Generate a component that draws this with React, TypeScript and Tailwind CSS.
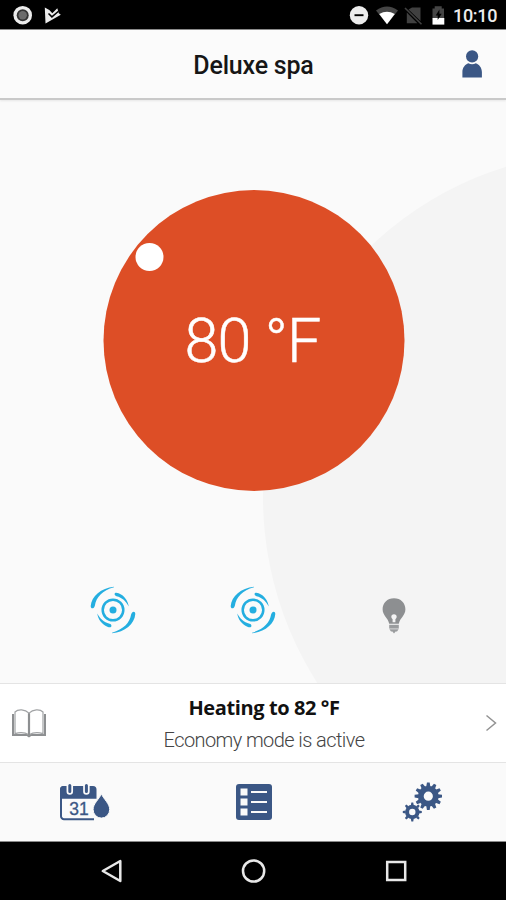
type IconProps = {
  className?: string;
};

const navy = "#3b5785";

const StatusBar = () => {
  return (
    <div className="flex h-[29px] items-center justify-between bg-black">
      <svg width="70" height="29" viewBox="0 0 70 29">
        <circle cx="22.7" cy="15.2" r="9.3" fill="#ececec" />
        <circle cx="22.7" cy="15.2" r="6" fill="#333" />
        <circle cx="22.7" cy="15.2" r="4.2" fill="#6b6b6b" />
        <path d="M44.8 7.500l4.500 2.500 3 3.200 5-5 1.500 5 2 1.500L45.500 23.600z" fill="#ececec" />
        <path d="M48.500 13.500l3.400 3.400 6.600-5.600" fill="none" stroke="#000" strokeWidth="1.500" />
      </svg>
      <div className="flex h-[29px]">
        <svg width="98" height="29" viewBox="348 0 98 29">
          <circle cx="359" cy="15.2" r="9.2" fill="#ececec" />
          <path d="M354.5 15.2h9" stroke="#000" strokeWidth="1.9" />
          <path d="M376 10.6 Q387 2.4 398 10.6 L387 24.2 Z" fill="#454545" />
          <path d="M379.2 14 Q387 9.4 394.8 14 L387 24.2 Z" fill="#fff" />
          <path d="M412 7.5h8.5v13.5L408.5 9.4z" fill="#404040" />
          <path d="M406.8 12.5v10.7h10.6z" fill="#404040" />
          <path d="M405 8l16.5 16.2" stroke="#404040" strokeWidth="1.6" />
          <path d="M432.5 8.4h2.2V6.2h7v2.2h2.3v10h-11.5z" fill="#454545" />
          <path d="M432.5 18h11.8v6.6h-11.8z" fill="#fff" />
          <path d="M439.4 9.5l-3.7 6h2v4.5l4-6.3h-2.3z" fill="#000" />
        </svg>
        <span className="w-[60px] pl-[7px] pt-[1px] font-['Roboto',sans-serif] text-[18px] leading-[30px] font-medium tracking-[-0.300px] text-[#ececec]">
          10:10
        </span>
      </div>
    </div>
  );
};

const UserIcon = ({ className }: IconProps) => (
  <svg className={className} width="22" height="30" viewBox="461 49 22 30" fill={navy}>
    <circle cx="472.1" cy="56.4" r="6.1" />
    <path d="M462.4 77.5V72c0-4.400 2.800-7.700 6-8.800 2.200 1.300 5.200 1.300 7.400 0 3.200 1.100 6.100 4.400 6.100 8.800v5.500z" />
  </svg>
);

const JetIcon = () => (
  <svg width="50" height="50" viewBox="-25 -25 50 50">
    <circle r="10.3" fill="none" stroke="#24aee0" strokeWidth="2.5" />
    <g fill="#24aee0">
      <circle r="3.500" />
      <path d="M1-23.300C-12-22-21.500-14-22.300-4c0 3.400 3.400 3 4.200-.6C-16.800-12.600-10.600-19.600 1-22.700z" />
      <path d="M-1 23.300C12 22 21.500 14 22.300 4c0-3.400-3.400-3-4.200.6C16.800 12.600 10.600 19.600-1 22.700z" />
      <path d="M1.600-15.900c0-1.600 2-1.600 4-.8C11-14.600 15-9.400 15.700-3.600 12.700-9 9.300-12.400 3.500-13.800c-1.300-.3-1.900-1-1.900-2.100z" />
      <path d="M-1.600 15.900c0 1.600-2 1.600-4 .8C-11 14.600-15 9.400-15.700 3.600-12.700 9-9.300 12.400-3.500 13.800c1.300.3 1.900 1 1.900 2.100z" />
    </g>
  </svg>
);

const BulbIcon = () => (
  <svg width="24" height="36" viewBox="0 0 24 36">
    <path
      d="M12 .3C5.2.3.6 5.2.6 11.3c0 6.400 5.400 8.500 6.600 14.500h9.600c1.200-6 6.600-8.100 6.600-14.500C23.400 5.200 18.800.3 12 .3z"
      fill="#8d8f91"
    />
    <path
      d="M12 16.200c-1.700 0-2.700 1.200-2.700 2.600 0 1.300.8 1.800 1.300 2.400v3h2.800v-3c.5-.6 1.300-1.100 1.300-2.400 0-1.400-1-2.600-2.700-2.600z"
      fill="#f4f4f4"
    />
    <path d="M7.200 26.800h9.600v3.800H7.200z" fill="#9a9c9e" />
    <path d="M7.400 31.200h9.200l-1.600 2.400h-1.400L12 35.400l-1.600-1.800H9z" fill="#9a9c9e" />
  </svg>
);

const BookIcon = () => (
  <svg width="36" height="30" viewBox="11 708 36 30" fill="none">
    <path d="M13 714v21h14l2 1.400 2-1.400h14v-21" stroke="#8d8f91" strokeWidth="2" />
    <path
      d="M15 712c3-3.200 10-3 14 1.200 4-4.200 11-4.400 14-1.200v21.600c-4-1.200-10-1.200-14 1.200-4-2.400-10-2.400-14-1.200z"
      fill="#fff"
      stroke="#a1a3a5"
      strokeWidth="1.200"
    />
    <path d="M29 713.200V735" stroke="#8d8f91" strokeWidth="2.200" />
  </svg>
);

const CalendarIcon = () => (
  <svg width="52" height="40" viewBox="59 782 52 40">
    <path
      d="M94 819.200H64a3 3 0 0 1-3-3V790a3 3 0 0 1 3-3h28.500"
      fill="none"
      stroke={navy}
      strokeWidth="2"
    />
    <path d="M60 798.800V789.500a3.500 3.500 0 0 1 3.500-3.500H93a3.500 3.500 0 0 1 3.500 3.500v9.300z" fill={navy} />
    <path d="M69.800 786v5.500M86.400 786v5.500" stroke="#fafafa" strokeWidth="6.500" strokeLinecap="round" />
    <path d="M69.800 785.500v6M86.400 785.500v6" stroke={navy} strokeWidth="3" strokeLinecap="round" />
    <text
      x="69.300"
      y="815"
      fontFamily="Liberation Sans, sans-serif"
      fontSize="17.500"
      fill={navy}
      stroke={navy}
      strokeWidth=".3"
    >
      31
    </text>
    <path
      d="M101.400 793.800c-2.200 5.400-8.300 9.700-8.300 15.700a8.300 8.600 0 0 0 16.600 0c0-6-6.100-10.300-8.300-15.700z"
      fill={navy}
      stroke="#fafafa"
      strokeWidth="1"
    />
  </svg>
);

const ListIcon = () => (
  <svg width="36" height="36" viewBox="0 0 36 36">
    <rect width="36" height="36" rx="3" fill={navy} />
    {[4.5, 14.5, 24.5].map((y) => (
      <g key={y} fill="#fafafa">
        <rect x="4.500" y={y} width="7" height="7" />
        <rect x="15" y={y + 2.5} width="16" height="2" />
      </g>
    ))}
  </svg>
);

type GearProps = {
  x: number;
  y: number;
  r: number;
  hole: number;
  teeth: number;
};

const Gear = ({ x, y, r, hole, teeth }: GearProps) => (
  <g transform={`translate(${x} ${y})`}>
    <circle r={(r * 0.76 + hole) / 2} fill="none" stroke={navy} strokeWidth={r * 0.76 - hole} />
    {Array.from({ length: teeth }, (_, i) => (
      <path
        key={i}
        d={`M${-r * 0.15} ${-r * 0.7}L${-r * 0.1} ${-r}H${r * 0.1}L${r * 0.15} ${-r * 0.7}z`}
        fill={navy}
        transform={`rotate(${(i * 360) / teeth})`}
      />
    ))}
  </g>
);

const GearsIcon = () => (
  <svg width="40" height="40" viewBox="402 782 40 40">
    <Gear x={428.3} y={796.2} r={13.7} hole={4.6} teeth={12} />
    <Gear x={412.3} y={812} r={9.5} hole={3.2} teeth={8} />
  </svg>
);

const Dashboard = () => {
  return (
    <main className="relative h-[583px] overflow-hidden bg-[#fafafa]">
      {/* Backdrop curve */}
      <div className="absolute left-[263px] top-[51px] size-[692px] rounded-full bg-[#f4f4f4]" />

      {/* Temperature dial */}
      <div className="relative mx-auto mt-[90px] flex size-[301px] translate-x-[0.500px] items-center justify-center rounded-full bg-[#dd4e26]">
        <span className="absolute left-[32px] top-[53px] size-[28px] rounded-full bg-white" />
        <span className="-translate-x-[1px] translate-y-[1px] whitespace-nowrap font-['Roboto',sans-serif] text-[61px] leading-none font-light tracking-[-0.800px] text-white [-webkit-text-stroke:0.500px_white]">
          80 °F
        </span>
      </div>

      {/* Pumps and light */}
      <div className="relative mt-[94px] flex items-start pl-[88px]">
        <JetIcon />
        <div className="ml-[90px]">
          <JetIcon />
        </div>
        <div className="ml-[104px] mt-[13px]">
          <BulbIcon />
        </div>
      </div>
    </main>
  );
};

const App = () => {
  return (
    <div className="flex h-[900px] w-[506px] flex-col overflow-hidden bg-[#fafafa]">
      <StatusBar />

      <header className="relative z-10 flex h-[71px] items-center justify-center border-t border-t-[#8a8a8a] border-b-2 border-b-[#c9c9c9] bg-[#fbfbfb] pt-[4px] pl-[1px] shadow-[0_1px_2px_rgba(0,0,0,0.08)]">
        <h1 className="font-['Roboto',sans-serif] text-[25px] font-medium tracking-[-0.200px] text-[#161616]">
          Deluxe spa
        </h1>
        <UserIcon className="absolute right-[23px] top-[19px]" />
      </header>

      <Dashboard />

      <section className="flex h-[80px] items-center border-y border-[#e4e4e4] bg-white pl-[11px] pr-[9px]">
        <BookIcon />
        <div className="flex-1 pt-[1px] pr-[4px] text-center text-[20px] leading-[32px] whitespace-nowrap">
          <p className="font-['Open_Sans',sans-serif] font-bold tracking-[-0.400px] text-[#111]">
            Heating to 82 °F
          </p>
          <p className="font-['Roboto',sans-serif] font-light tracking-[-0.580px] text-[#444]">
            Economy mode is active
          </p>
        </div>
        <svg width="12" height="18" viewBox="0 0 12 18" fill="none">
          <path d="M1.500 1.500l9 7.500-9 7.500" stroke="#929292" strokeWidth="1.500" />
        </svg>
      </section>

      <nav className="flex h-[79px] items-center border-b border-b-[#8a8a8a]">
        <div className="flex flex-1 justify-center pl-[1px]">
          <CalendarIcon />
        </div>
        <div className="flex flex-1 justify-center pl-[1px]">
          <ListIcon />
        </div>
        <div className="flex flex-1 justify-center">
          <GearsIcon />
        </div>
      </nav>

      <footer className="h-[58px] bg-black">
        <svg width="506" height="58" viewBox="0 842 506 58" fill="none" stroke="#e8e8e8" strokeWidth="2.500">
          <path d="M102.800 871l17.500-10v20z" strokeLinejoin="round" />
          <circle cx="253.600" cy="871" r="10.600" />
          <rect x="387.200" y="862" width="18" height="18" />
        </svg>
      </footer>
    </div>
  );
};

export default App;
